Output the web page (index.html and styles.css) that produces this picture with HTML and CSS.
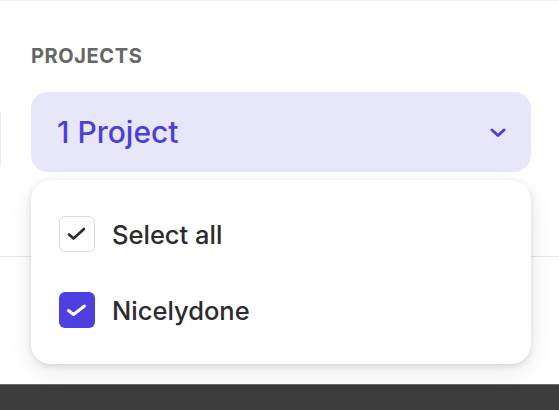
FILE: index.html
```html
<!DOCTYPE html>
<html>
<head>
  <title>Filters</title>
  <link rel="stylesheet" href="styles.css">
</head>
<body>
  <div class="page">
    <div class="filters">
      <div class="field field-prev">
        <div class="select select-plain"></div>
      </div>

      <div class="field">
        <div class="field-label">PROJECTS</div>
        <div class="dropdown">
          <button class="select" type="button">
            <span>1 Project</span>
            <svg class="chevron" width="16" height="10" viewBox="0 0 16 10">
              <polyline points="2,2 8,7.5 14,2" fill="none" stroke="currentColor" stroke-width="3" stroke-linecap="round" stroke-linejoin="round"/>
            </svg>
          </button>

          <div class="menu">
            <label class="option">
              <span class="box">
                <svg width="36" height="36" viewBox="0 0 36 36">
                  <polyline points="10,18.5 14.5,22.5 25,13" fill="none" stroke="currentColor" stroke-width="2.6" stroke-linecap="round" stroke-linejoin="round"/>
                </svg>
              </span>
              Select all
            </label>
            <label class="option">
              <span class="box checked">
                <svg width="36" height="36" viewBox="0 0 36 36">
                  <polyline points="9.5,18.5 14.5,22.5 25.5,14" fill="none" stroke="currentColor" stroke-width="3" stroke-linecap="round" stroke-linejoin="round"/>
                </svg>
              </span>
              Nicelydone
            </label>
          </div>
        </div>
      </div>
    </div>

    <div class="content"></div>
  </div>

  <div class="footer"></div>
</body>
</html>
```

FILE: styles.css
```css
/* filter bar with an open project dropdown */
body {
  margin: 0;
  font-family: Inter, "Noto Sans", sans-serif;
  background-color: #fff;
  overflow: hidden;
}

.page {
  height: 384px;
  border-top: 1px solid #f1f1f1;
  box-sizing: border-box;
}

.filters {
  display: flex;
  gap: 30px;
  margin-left: -200px;
  padding-top: 45px;
  height: 210px;
  border-bottom: 1px solid #e6e6e6;
}

.field {
  display: flex;
  flex-direction: column;
}

.field-prev {
  width: 201px;
  padding-top: 62px;
}

.select-plain {
  height: 54px;
  margin-top: -9px;
  border: 1px solid #dcdcdc;
  border-radius: 0 10px 10px 0;
  background: #fff;
}

.field-label {
  font-size: 20px;
  font-weight: 700;
  color: #666;
  letter-spacing: 0.6px;
  line-height: 20px;
}

.dropdown {
  position: relative;
  margin-top: 26px;
  width: 500px;
}

.select {
  display: flex;
  align-items: center;
  justify-content: space-between;
  width: 100%;
  height: 80px;
  padding: 0 25px 0 26px;
  box-sizing: border-box;
  border: none;
  border-radius: 17px;
  background-color: #e8e6f9;
  color: #4b3fdc;
  font-family: inherit;
  font-size: 30px;
  font-weight: 500;
  cursor: pointer;
}

.chevron {
  margin-top: 2px;
}

.menu {
  position: absolute;
  top: 88px;
  left: 0;
  right: 0;
  padding: 36px 28px;
  display: flex;
  flex-direction: column;
  gap: 40px;
  background-color: #fff;
  border-radius: 20px;
  box-shadow: 0 2px 6px rgba(0, 0, 0, 0.12), 0 8px 24px rgba(0, 0, 0, 0.08);
}

.option {
  display: flex;
  align-items: center;
  gap: 17px;
  font-size: 25.5px;
  font-weight: 500;
  color: #2b2b30;
  cursor: pointer;
}

.box {
  display: flex;
  width: 36px;
  height: 36px;
  box-sizing: border-box;
  border: 1.5px solid #d4dbe9;
  border-radius: 6px;
  color: #2b2b30;
}

.box svg {
  margin: -1.5px;
}

.box.checked {
  border: none;
  background-color: #4d3fe0;
  color: #fff;
}

.box.checked svg {
  margin: 0;
}

.footer {
  height: 26px;
  background-color: #3c3c3c;
  border-top: 1px solid #6b6b6b;
}
```
